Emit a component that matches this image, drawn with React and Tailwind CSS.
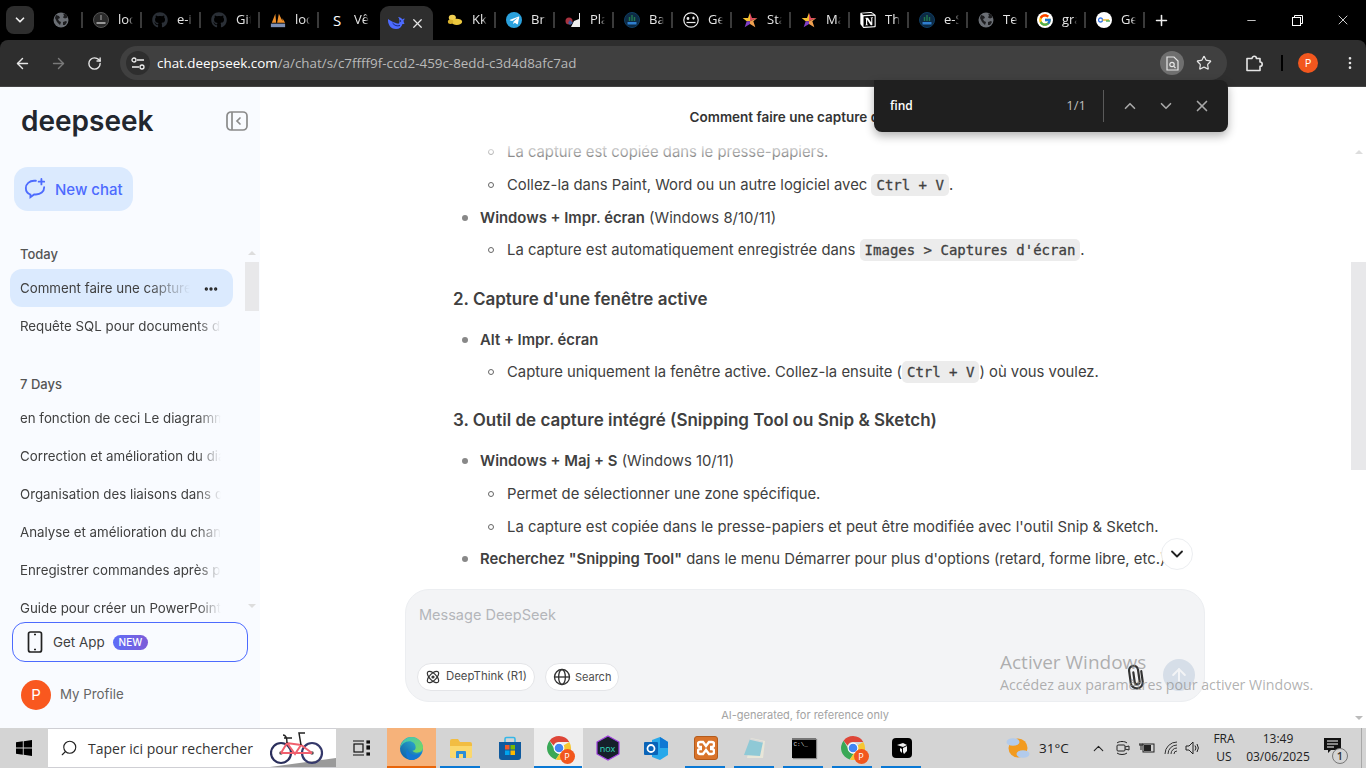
import React from "react";
import { FaGithub, FaTelegramPlane } from "react-icons/fa";
import { FcGoogle } from "react-icons/fc";
import { SiNotion } from "react-icons/si";
import { ArrowLeft, ArrowRight, RotateCw, Star, MoreVertical, X, Plus, ChevronDown, ChevronUp, ArrowUp, Search, Minus, Ellipsis } from "lucide-react";

const Globe = ({ c = "#6b6f75" }) => (
  <svg width="16" height="16" viewBox="0 0 16 16"><circle cx="8" cy="8" r="7.5" fill={c} /><path d="M3 3l3 1 1 2-2 1 1 2 2 1-1 3-3-3-2-4zM10 1.500l1 2-1 2 2 1 2.500-1-1-3zM10 10l3-1 1 1-2 3-2 0z" fill="#1d1d1f" /></svg>
);
const Pnb = () => (
  <svg width="16" height="16" viewBox="0 0 16 16"><circle cx="8" cy="8" r="7.500" fill="#0d2a44" stroke="#0e3d63" /><path d="M8 3v6M5.500 5v4M10.500 5v4" stroke="#22794e" strokeWidth="1.400" /><rect x="3.500" y="10" width="9" height="2.500" fill="#2f7fd0" /></svg>
);
const Inpi = () => (
  <svg width="16" height="16" viewBox="0 0 16 16"><circle cx="8" cy="8" r="7.500" fill="#2a2a2a" stroke="#555" /><path d="M8 3v5" stroke="#aaa" /><rect x="3.500" y="10" width="9" height="2" fill="#999" /></svg>
);
const Sails = () => (
  <svg width="18" height="17" viewBox="0 0 18 17"><path d="M2 11 6 1l1 10zM8 11l2-10 5 10zM14 11l0-5 3 5z" fill="#ee8f2a" /><rect x="1" y="12" width="16" height="4" fill="#7d8fb5" /></svg>
);
const Whale = () => (
  <svg width="18" height="14" viewBox="0 0 18 14"><path fill="#4d6bfe" d="M1 3c-.5 5 2.500 10 8 10 3.500 0 5.500-2 6.500-5 .8.2 1.500 0 2-.5-.6-.7-1-1.700-1-3 .5-.4 1-1 1.200-2-.9.1-1.700.4-2.300 1C14.500 2 13 1 11 1c1.500 1.500 2 4 1 6.500C9 8 4 5 1 3z" /><path d="M5.500 7c2 2.500 4.500 3.500 7.500 2.500" stroke="#0b1a5c" strokeWidth=".8" fill="none" /><circle cx="13.500" cy="5" r=".7" fill="#0b1a5c" /></svg>
);
const Coins = () => (
  <svg width="18" height="14" viewBox="0 0 18 14"><ellipse cx="6" cy="4.500" rx="4" ry="3.500" fill="#f0cf52" /><ellipse cx="11" cy="9" rx="6" ry="3.500" fill="#ecc83e" /><ellipse cx="4" cy="9" rx="3" ry="2.500" fill="#d9b12c" /></svg>
);
const Telegram = () => (
  <span className="w-4 h-4 rounded-full bg-[#2aa1dd] flex items-center justify-center text-white"><FaTelegramPlane size={11} /></span>
);
const Plaza = () => (
  <svg width="16" height="16" viewBox="0 0 16 16"><path d="M14 1h1v14H6l3-6 5-2z" fill="#eee" /><circle cx="4" cy="9" r="3.500" fill="#a8323f" /><path d="M5 8l3 3-3 2-2-2z" fill="#3e5c9c" /></svg>
);
const Gemoji = () => (
  <svg width="16" height="16" viewBox="0 0 16 16" fill="none" stroke="#eee" strokeWidth="1.200"><circle cx="8" cy="8" r="7.200" /><path d="M3.500 10.500h9" /><circle cx="5" cy="6.500" r=".8" fill="#eee" /><path d="M10.500 4.500v3M9 6h3" /></svg>
);
const StarC = () => (
  <svg width="16" height="16" viewBox="0 0 24 24"><path d="M12 1l3 8h8l-11 5z" fill="#e04e5e" /><path d="M12 1 9 9H1l6 5 5 0z" fill="#f5c030" /><path d="M7 14 4 23l8-5 0-4z" fill="#7f3fc4" /><path d="M12 14v4l8 5-3-9 6-5z" fill="#f0a050" /></svg>
);
const Notion = () => <span className="w-4 h-4 flex items-center justify-center text-white"><SiNotion size={16} /></span>;
const GoogleI = () => <span className="w-4 h-4 rounded-full bg-white flex items-center justify-center"><FcGoogle size={14} /></span>;
const GKey = () => (
  <span className="w-4 h-4 rounded-full bg-white flex items-center justify-center">
    <svg width="12" height="8" viewBox="0 0 12 8"><circle cx="2.500" cy="4" r="2" fill="none" stroke="#3a78e8" strokeWidth="1.300" /><path d="M4.500 4H11" stroke="#e8b020" strokeWidth="1.400" /><path d="M9 4v2M11 4v2" stroke="#3aa856" strokeWidth="1.300" /></svg>
  </span>
);

const tabs = [
  { i: <Globe />, w: "w-[41px]", noTitle: true },
  { i: <Inpi />, t: "localhost" },
  { i: <FaGithub size={16} color="#2a2f36" />, t: "e-invoice" },
  { i: <FaGithub size={16} color="#2a2f36" />, t: "GitHub" },
  { i: <Sails />, t: "localhost" },
  { i: <span className="w-4 text-center text-white text-[15px] leading-4">S</span>, t: "Vêtements" },
  { active: true },
  { i: <Coins />, t: "Kkiapay" },
  { i: <Telegram />, t: "Bruno" },
  { i: <Plaza />, t: "Plateforme" },
  { i: <Pnb />, t: "Banque" },
  { i: <Gemoji />, t: "Generate" },
  { i: <StarC />, t: "Starter" },
  { i: <StarC />, t: "Manager" },
  { i: <Notion />, t: "The" },
  { i: <Pnb />, t: "e-Services" },
  { i: <Globe />, t: "Test" },
  { i: <GoogleI />, t: "gratuit" },
  { i: <GKey />, t: "Get" },
];

function Tab({ tab, hideSep }) {
  if (tab.active) {
    return (
      <div className="w-[59px] h-[34px] self-end flex items-center justify-center">
        <div className="w-[53px] h-[34px] bg-[#2e2e2e] rounded-t-[9px] flex items-center pl-[7px] gap-[5px]">
          <Whale />
          <X size={15} color="#e6e6e6" strokeWidth={2} />
        </div>
      </div>
    );
  }
  return (
    <div className={`${tab.w || "w-[59px]"} h-10 flex items-center shrink-0`}>
      <div className={`flex-1 flex items-center ${tab.noTitle ? "justify-center" : "pl-[11px]"} gap-[9px] min-w-0`}>
        <span className="w-4 flex justify-center shrink-0">{tab.i}</span>
        {tab.t && (
          <span className="w-[15px] overflow-hidden whitespace-nowrap text-[13px] text-[#e6e6e6] [mask-image:linear-gradient(to_right,black_70%,transparent)]">{tab.t}</span>
        )}
      </div>
      {!hideSep && <span className="w-[2px] h-[16px] bg-[#3a3a3a] shrink-0 mr-[-1px]" />}
    </div>
  );
}

function ChromeIco({ s = 26, badge = true }) {
  return (
    <span className="relative inline-block" style={{ width: s, height: s }}>
      <svg width={s} height={s} viewBox="0 0 24 24">
        <path d="M12 1a11 11 0 0 1 9.500 5.500H12A5.500 5.500 0 0 0 7 9.700L3.300 5.200A11 11 0 0 1 12 1z" fill="#de4638" />
        <path d="M3.300 5.200 7.500 12.500a5 5 0 0 0 5 5L9 22.600A11 11 0 0 1 3.300 5.200z" fill="#3aa856" />
        <path d="M21.500 6.500A11 11 0 0 1 9 22.600l4-6a5 5 0 0 0 3-7z" fill="#f6c733" />
        <circle cx="12" cy="12" r="4.500" fill="#4285f4" stroke="#fff" strokeWidth="1" />
      </svg>
      {badge && <span className="absolute right-[-3px] bottom-[-3px] w-[15px] h-[15px] rounded-full bg-[#f2571e] text-white text-[9px] leading-[15px] text-center font-['Open_Sans',sans-serif]">P</span>}
    </span>
  );
}

const Edge = () => (
  <svg width="25" height="25" viewBox="0 0 24 24">
    <defs>
      <linearGradient id="eg" x1="0" y1="1" x2="1" y2="0"><stop offset="0" stopColor="#0c59a4" /><stop offset="1" stopColor="#36c1d8" /></linearGradient>
      <linearGradient id="eh" x1="0" y1="0" x2="1" y2="1"><stop offset="0" stopColor="#3bc4c0" /><stop offset="1" stopColor="#7edb54" /></linearGradient>
    </defs>
    <circle cx="12" cy="12" r="11" fill="url(#eg)" />
    <path d="M1 12C2 5 7 1 12 1c6 0 11 5 11 10 0 3-3 5-6 5-2 0-4-1-4-2 2 0 3-1 3-3 0-4-3-6-6-6-4 0-8 3-9 7z" fill="url(#eh)" />
    <path d="M8 12c0 3 3 6 6 6 3 0 6-1 8-3-1 4-5 8-10 8-3 0-5-2-5-6 0-2 0-4 1-5z" fill="#1377d3" />
  </svg>
);
const Explorer = () => (
  <svg width="24" height="22" viewBox="0 0 24 22"><path d="M1 4a2 2 0 0 1 2-2h6l2 3h10a2 2 0 0 1 2 2v12a2 2 0 0 1-2 2H3a2 2 0 0 1-2-2z" fill="#f2bd42" /><path d="M1 9h22v10a2 2 0 0 1-2 2H3a2 2 0 0 1-2-2z" fill="#fbd86d" /><path d="M7 21v-6a1 1 0 0 1 1-1h8a1 1 0 0 1 1 1v6h-3v-4h-4v4z" fill="#2d8ed8" /></svg>
);
const Store = () => (
  <svg width="24" height="25" viewBox="0 0 24 25"><path d="M7 6V3a1.500 1.500 0 0 1 1.500-1.500h7A1.500 1.500 0 0 1 17 3v3" fill="none" stroke="#36b7e8" strokeWidth="1.600" /><path d="M1 6h22v15a3 3 0 0 1-3 3H4a3 3 0 0 1-3-3z" fill="#0f5a9e" /><rect x="7" y="9" width="4.500" height="4.500" fill="#f05a28" /><rect x="12.500" y="9" width="4.500" height="4.500" fill="#7ab800" /><rect x="7" y="14.500" width="4.500" height="4.500" fill="#00a4ef" /><rect x="12.500" y="14.500" width="4.500" height="4.500" fill="#ffb900" /></svg>
);
const Nox = () => (
  <span className="relative w-[24px] h-[26px] flex items-center justify-center">
    <svg width="24" height="26" viewBox="0 0 24 26" className="absolute inset-0"><path d="M12 1 23 7v12l-11 6L1 19V7z" fill="#16202a" stroke="#a03ee0" strokeWidth="1.200" /></svg>
    <span className="relative text-[9px] leading-none text-[#35dfc0] font-['Open_Sans',sans-serif]">nox</span>
  </span>
);
const Outlook = () => (
  <svg width="25" height="23" viewBox="0 0 25 23"><path d="M8 3 16 0l8 5v13l-8 5-8-3z" fill="#28a8ea" /><path d="M16 0l8 5v6l-8 0z" fill="#0f78d4" /><rect x="0" y="5" width="14" height="13" rx="1" fill="#0a64b8" /><circle cx="7" cy="11.500" r="3.500" fill="none" stroke="#fff" strokeWidth="1.800" /></svg>
);
const Xampp = () => (
  <span className="w-[24px] h-[24px] rounded-[3px] bg-[#d9732a] border border-[#b35b1c] flex items-center justify-center">
    <svg width="18" height="16" viewBox="0 0 18 16" fill="none" stroke="#fff" strokeWidth="2.400"><path d="M3 2h3l3 4 3-4h3a2 2 0 0 1 2 2v1a2 2 0 0 1-2 2h-2M3 2a2 2 0 0 0-2 2v1a2 2 0 0 0 2 2h2M3 14a2 2 0 0 1-2-2v-1a2 2 0 0 1 2-2h2M15 14a2 2 0 0 0 2-2v-1a2 2 0 0 0-2-2h-2M3 14h3l3-4 3 4h3" /></svg>
  </span>
);
const Notepad = () => (
  <svg width="24" height="24" viewBox="0 0 24 24"><path d="M8 2 22 5 20 22 4 22z" fill="#e8e6d8" /><path d="M7 3 20 6 17 20 1 19z" fill="#8fc9d6" /><path d="M7 3 20 6" stroke="#d9d9d9" strokeWidth="1.500" /></svg>
);
const Cmd = () => (
  <span className="w-[24px] h-[20px] bg-black border-t-[2px] border-[#777] flex items-start pl-[2px] pt-[1px] text-[6px] leading-[8px] text-[#ddd] font-['Liberation_Mono',monospace] shadow-[1px_1px_1px_#888]">C:\_</span>
);
const Cube = () => (
  <span className="w-[20px] h-[20px] rounded-[4px] bg-black flex items-center justify-center">
    <svg width="12" height="13" viewBox="0 0 12 13"><path d="M1 3l6-2 4 2-4 2zM7 6l4-2v5l-3 3-1-2zM4 6l2 1v4L4 9z" fill="#eee" /></svg>
  </span>
);
const Bike = () => (
  <svg width="66" height="36" viewBox="0 0 66 36" fill="none" className="block">
    <path d="M0 36 66 27v9z" fill="#9a9a9a" />
    <circle cx="11" cy="22" r="10" stroke="#2a2f5c" strokeWidth="2.200" />
    <circle cx="42" cy="22" r="10" stroke="#34386a" strokeWidth="2.200" />
    <circle cx="11" cy="22" r="1.800" fill="#555" /><circle cx="42" cy="22" r="1.800" fill="#555" />
    <path d="M11 22 17 12 L31 14 L42 22 M17 12 L25 23 L31 14 M11 22H25 L42 22" stroke="#f0606e" strokeWidth="2" />
    <path d="M31 14 29 2h6M14 7h8M13 4c3 0 4 3 4 8" stroke="#222" strokeWidth="1.500" />
  </svg>
);
const Weather = () => (
  <svg width="24" height="24" viewBox="0 0 24 24"><circle cx="12" cy="12" r="9.500" fill="#f29b20" /><ellipse cx="7" cy="6" rx="6.500" ry="3.800" fill="#b2cbec" /><ellipse cx="17" cy="18" rx="6.500" ry="3.800" fill="#b2cbec" /></svg>
);
const WinLogo = () => (
  <svg width="16" height="16" viewBox="0 0 16 16" fill="#000"><path d="M0 2.300 6.800 1.300v6.200H0zM7.700 1.200 16 0v7.500H7.700zM0 8.400h6.800v6.300L0 13.700zM7.700 8.400H16V16l-8.300-1.200z" /></svg>
);

const TaskBtn = ({ children, under, bg }) => (
  <div className={`w-[49px] h-full flex items-center justify-center relative ${bg || ""}`}>
    {children}
    {under && <span className={`absolute bottom-0 h-[2px] ${under}`} />}
  </div>
);

const Side = ({ children }) => (
  <div className="h-[38px] shrink-0 px-[10px] pt-[2px] flex items-center text-[13.3px] text-[#404040] whitespace-nowrap">
    <span className="overflow-hidden w-[201px] [mask-image:linear-gradient(to_right,black_88%,transparent)]">{children}</span>
  </div>
);

const Code = ({ children }) => (
  <code className="bg-[#ececec] rounded-[5px] px-[5px] py-[3px] font-['DejaVu_Sans_Mono','Liberation_Mono',monospace] text-[14px] [-webkit-text-stroke:0.3px_#404040] text-[#404040] leading-[24px]">{children}</code>
);
const Li = ({ children, first }) => (
  <li className={`${first ? "" : "mt-[9px]"} leading-[24px] relative before:content-[''] before:absolute before:left-[-19px] before:top-[9px] before:w-[6px] before:h-[6px] before:rounded-full before:border before:border-[#666]`}>{children}</li>
);
const Outer = ({ children, cls }) => (
  <li className={`${cls || ""} leading-[24px] relative before:content-[''] before:absolute before:left-[-18px] before:top-[9px] before:w-[6px] before:h-[6px] before:rounded-full before:bg-[#888]`}>{children}</li>
);
const Sub = ({ children, tight }) => (
  <ul className={`pl-[27px] ${tight ? "mt-[8px]" : "mt-[9px]"}`}>{children}</ul>
);
const H3 = ({ children, cls }) => (
  <h3 className={`${cls} text-[17px] leading-[28px] font-semibold text-[#404040]`}>{children}</h3>
);

export default function App() {
  return (
    <div className="relative w-[1366px] h-[768px] overflow-hidden flex flex-col bg-white font-['Inter','Liberation_Sans',sans-serif]">
      {/* tab strip */}
      <div className="h-10 bg-black flex items-center shrink-0 font-['Open_Sans',sans-serif]">
        <div className="w-[28px] h-[28px] ml-[6px] mr-[7px] rounded-[8px] bg-[#2e2e2e] flex items-center justify-center shrink-0">
          <ChevronDown size={14} color="#eee" strokeWidth={3} />
        </div>
        {tabs.map((t, i) => (
          <Tab key={i} tab={t} hideSep={t.active || i === 5} />
        ))}
        <div className="w-[35px] flex justify-center"><Plus size={17} color="#eee" strokeWidth={2.200} /></div>
        <div className="flex-1" />
        <div className="flex items-center text-white">
          <div className="w-[46px] flex justify-center"><Minus size={13} strokeWidth={1.400} /></div>
          <div className="w-[46px] flex justify-center">
            <svg width="11" height="11" viewBox="0 0 11 11" fill="none" stroke="#fff"><rect x=".5" y="2.500" width="8" height="8" /><path d="M2.500 2.500V.5h8v8h-2" /></svg>
          </div>
          <div className="w-[46px] flex justify-center"><X size={16} strokeWidth={1.200} /></div>
        </div>
      </div>

      {/* toolbar */}
      <div className="h-[47px] shrink-0 bg-black">
        <div className="h-[47px] bg-[#2e2e2e] rounded-t-[8px] flex items-center font-['Open_Sans',sans-serif] border-b border-[#444]">
          <div className="w-[44px] flex justify-center"><ArrowLeft size={17} color="#e6e6e6" strokeWidth={2} /></div>
          <div className="w-[28px] flex justify-center"><ArrowRight size={17} color="#7a7a7a" strokeWidth={2} /></div>
          <div className="w-[44px] flex justify-center"><RotateCw size={15} color="#e6e6e6" strokeWidth={2.200} /></div>
          <div className="w-[1107px] h-[34px] ml-[4px] rounded-full bg-[#404040] flex items-center pl-[6px] pr-[15px] shrink-0">
            <div className="w-6 h-6 rounded-full bg-[#2e2e2e] flex items-center justify-center">
              <svg width="14" height="13" viewBox="0 0 14 13" fill="none" stroke="#eee" strokeWidth="1.300"><circle cx="3" cy="3" r="2" /><path d="M6 3h7M1 10h7" /><circle cx="11" cy="10" r="2" /></svg>
            </div>
            <div className="ml-[7px] text-[13.4px] text-[#b9b9b9] whitespace-nowrap"><span className="text-white">chat.deepseek.com</span>/a/chat/s/c7ffff9f-ccd2-459c-8edd-c3d4d8afc7ad</div>
            <div className="flex-1" />
            <div className="w-6 h-6 rounded-full bg-[#6f6f6f] flex items-center justify-center">
              <svg width="13" height="15" viewBox="0 0 13 15" fill="none" stroke="#e6e6e6" strokeWidth="1.200"><path d="M1 1h7l4 4v9H1z" /><circle cx="6" cy="8.500" r="2.200" /><path d="M7.800 10.300 9.500 12" /></svg>
            </div>
            <div className="w-[12px]" />
            <Star size={16} color="#e6e6e6" strokeWidth={1.800} />
          </div>
          <div className="w-[54px] flex justify-center">
            <svg width="17" height="17" viewBox="0 0 17 17" fill="none" stroke="#e6e6e6" strokeWidth="1.600"><path d="M1 3.500h5a2.200 2.200 0 0 1 4.400 0H14v3.500a2.200 2.200 0 0 1 0 4.400V15.500H1z" strokeLinejoin="round" /></svg>
          </div>
          <div className="w-[2px] h-[16px] bg-black" />
          <div className="w-[50px] flex justify-center"><span className="w-5 h-5 rounded-full bg-[#f2571e] text-white text-[11px] leading-5 text-center">P</span></div>
          <div className="flex-1 flex justify-center"><MoreVertical size={16} color="#e6e6e6" strokeWidth={2} /></div>
        </div>
      </div>

      {/* page */}
      <div className="flex-1 min-h-0 flex bg-white">
        {/* sidebar */}
        <aside className="w-[260px] shrink-0 bg-[#f9fbff] flex flex-col">
          <div className="h-[68px] shrink-0 pl-[20px] pr-[12px] flex items-center justify-between">
            <span className="text-[28px] leading-none font-semibold text-[#22262e] relative left-[1px]">deepseek</span>
            <svg width="22" height="20" viewBox="0 0 22 20" fill="none" stroke="#8b8b8b" strokeWidth="1.700"><rect x="1" y="1" width="20" height="18" rx="4" /><path d="M6 1v18" /><path d="M14 7l-3 3 3 3" strokeLinecap="round" /></svg>
          </div>
          <div className="pl-[14px] mt-[12px] shrink-0">
            <div className="w-[119px] h-[44px] rounded-[14px] bg-[#dbeafe] flex items-center pl-[10px] gap-[9px] text-[#4d6bfe] text-[15px] font-medium">
              <svg width="22" height="22" viewBox="0 0 24 24" fill="none" stroke="#4d6bfe" strokeWidth="2" strokeLinecap="round"><path d="M13 3H11C6 3 2 6.500 2 11c0 3.500 2 6 5 7v3l4-3h2c5 0 9-3 9-8" /><path d="M19 1v6M16 4h6" /></svg>
              <span className="relative top-[1px]">New chat</span>
            </div>
          </div>
          <div className="flex-1 min-h-0 flex mt-[34px]">
            <div className="w-[223px] ml-[10px] overflow-hidden">
              <div className="h-[24px] px-[10px] pb-[4px] flex items-center text-[13px] font-medium text-[#555]">Today</div>
              <div className="h-[38px] rounded-[12px] bg-[#dbeafe] px-[10px] pt-[2px] flex items-center text-[13.3px] text-[#404040] whitespace-nowrap">
                <span className="overflow-hidden w-[170px] [mask-image:linear-gradient(to_right,black_75%,transparent)]">Comment faire une capture d'écran</span>
                <Ellipsis size={16} color="#222" strokeWidth={3} className="ml-[13px]" />
              </div>
              <Side>Requête SQL pour documents de base</Side>
              <div className="h-[24px] mt-[28px] mb-[2px] px-[10px] flex items-center text-[13px] font-medium text-[#555]">7 Days</div>
              <Side>en fonction de ceci Le diagramme de</Side>
              <Side>Correction et amélioration du diagramme</Side>
              <Side>Organisation des liaisons dans diagramme</Side>
              <Side>Analyse et amélioration du changement</Side>
              <Side>Enregistrer commandes après paiement</Side>
              <Side>Guide pour créer un PowerPoint efficace</Side>
            </div>
            <div className="w-[14px] ml-[12px] flex flex-col items-center">
              <span className="mt-[6px] w-0 h-0 border-x-[4px] border-x-transparent border-b-[4px] border-b-[#ddd]" />
              <div className="mt-[7px] w-[14px] h-[49px] bg-[#e8e8ea]" />
              <div className="flex-1" />
              <span className="mb-[14px] w-0 h-0 border-x-[4px] border-x-transparent border-t-[4px] border-t-[#ddd]" />
            </div>
          </div>
          <div className="h-[40px] ml-[12px] w-[236px] shrink-0 rounded-[13px] border border-[#4d6bfe] flex items-center pl-[13px] text-[13.4px] text-[#404040]">
            <svg width="18" height="22" viewBox="0 0 18 22" fill="none" stroke="#222" strokeWidth="1.700"><rect x="2.500" y="1" width="13" height="20" rx="2" /><path d="M8 3.500h2M8 18.500h2" /></svg>
            <span className="ml-[9px]">Get App</span>
            <span className="ml-[8px] h-[15px] px-[6px] rounded-full bg-gradient-to-r from-[#5b6ef8] to-[#7d5bd8] text-white text-[10px] leading-[15px] font-medium">NEW</span>
          </div>
          <div className="h-[66px] shrink-0 pl-[21px] flex items-center gap-[9px] text-[13.3px] text-[#666]">
            <span className="w-[30px] h-[30px] rounded-full bg-[#f9581f] text-white text-[15px] leading-[30px] text-center">P</span>
            My Profile
          </div>
        </aside>

        {/* main */}
        <main className="flex-1 min-w-0 flex flex-col items-center pr-[1px]">
          <div className="h-[45px] shrink-0 w-full flex items-center justify-center text-[13.5px] font-semibold text-[#333] pt-[16px]">
            Comment faire une capture d'écran
          </div>
          <div className="relative flex-1 min-h-0 w-[800px] pt-[8px] pl-[48px] text-[14.85px] text-[#404040] overflow-hidden">
            <div className="absolute left-0 right-0 top-0 h-[34px] bg-gradient-to-b from-white from-[30%] to-transparent z-10" />
            <ul className="pl-[27px]">
              <li>
                <ul className="pl-[27px]">
                  <Li first>La capture est copiée dans le presse-papiers.</Li>
                  <Li>Collez-la dans Paint, Word ou un autre logiciel avec <Code>Ctrl + V</Code>.</Li>
                </ul>
              </li>
              <Outer cls="mt-[9px]"><strong className="font-semibold">Windows + Impr. écran</strong> (Windows 8/10/11)
                <Sub tight><Li first>La capture est automatiquement enregistrée dans <Code>Images &gt; Captures d'écran</Code>.</Li></Sub>
              </Outer>
            </ul>
            <H3 cls="mt-[23px]">2. Capture d'une fenêtre active</H3>
            <ul className="pl-[27px] mt-[15px]">
              <Outer><strong className="font-semibold">Alt + Impr. écran</strong>
                <Sub tight><Li first>Capture uniquement la fenêtre active. Collez-la ensuite (<Code>Ctrl + V</Code>) où vous voulez.</Li></Sub>
              </Outer>
            </ul>
            <H3 cls="mt-[22px]">3. Outil de capture intégré (Snipping Tool ou Snip &amp; Sketch)</H3>
            <ul className="pl-[27px] mt-[15px]">
              <Outer><strong className="font-semibold">Windows + Maj + S</strong> (Windows 10/11)
                <Sub>
                  <Li first>Permet de sélectionner une zone spécifique.</Li>
                  <Li>La capture est copiée dans le presse-papiers et peut être modifiée avec l'outil Snip &amp; Sketch.</Li>
                </Sub>
              </Outer>
              <Outer cls="mt-[8px]"><span className="whitespace-nowrap"><strong className="font-semibold">Recherchez "Snipping Tool"</strong> dans le menu Démarrer pour plus d'options (retard, forme libre, etc.).</span></Outer>
            </ul>
            <div className="absolute left-[756px] bottom-[19px] w-[32px] h-[32px] rounded-full bg-white border border-[#eceef1] flex items-center justify-center">
              <ChevronDown size={20} color="#222" strokeWidth={2.200} />
            </div>
          </div>
          <div className="w-[800px] h-[113px] shrink-0 rounded-[24px] bg-[#f3f4f6] border border-[#eceef1] pl-[11px] pr-[9px] flex flex-col">
            <div className="pl-[2px] pt-[13px] text-[14.5px] leading-[24px] text-[#b4b6ba]">Message DeepSeek</div>
            <div className="flex-1" />
            <div className="flex items-end gap-[10px] pb-[10px]">
              <div className="h-[28px] px-[7px] rounded-full bg-white border border-[#e4e5e8] flex items-center gap-[5px] text-[11.4px] text-[#4c4c4c]">
                <svg width="16" height="16" viewBox="0 0 24 24" fill="none" stroke="#333" strokeWidth="1.800"><ellipse cx="12" cy="12" rx="11" ry="5" transform="rotate(45 12 12)" /><ellipse cx="12" cy="12" rx="11" ry="5" transform="rotate(-45 12 12)" /><circle cx="12" cy="12" r="1.500" fill="#333" /></svg>
                DeepThink (R1)
              </div>
              <div className="h-[28px] px-[7px] rounded-full bg-white border border-[#e4e5e8] flex items-center gap-[4px] text-[11px] text-[#4c4c4c]">
                <svg width="18" height="18" viewBox="0 0 24 24" fill="none" stroke="#333" strokeWidth="1.800"><circle cx="12" cy="12" r="10" /><ellipse cx="12" cy="12" rx="4.500" ry="10" /><path d="M2 12h20" /></svg>
                Search
              </div>
              <div className="flex-1" />
              <svg width="20" height="26" viewBox="0 0 20 26" fill="none" stroke="#333" strokeWidth="2.200" strokeLinecap="round" className="rotate-[-8deg] mr-[7px] mb-[1px]"><path d="M8 8v10a2.500 2.500 0 0 0 5 0V6a4.500 4.500 0 0 0-9 0v12.500a6 6 0 0 0 12 0V8" /></svg>
              <div className="w-8 h-8 rounded-full bg-[#d6dee8] flex items-center justify-center"><ArrowUp size={20} color="#f3f4f6" strokeWidth={2.400} /></div>
            </div>
          </div>
          <div className="h-[26px] shrink-0 flex items-center text-[11px] text-[#a3a3a3]">AI-generated, for reference only</div>
        </main>

        {/* page scrollbar */}
        <div className="w-[15px] shrink-0 flex flex-col items-center">
          <span className="mt-[63px] w-0 h-0 border-x-[4px] border-x-transparent border-b-[4px] border-b-[#ddd]" />
          <div className="mt-[108px] w-[15px] h-[208px] bg-[#e8e8ea]" />
          <div className="flex-1" />
          <span className="mb-[8px] w-0 h-0 border-x-[4px] border-x-transparent border-t-[4px] border-t-[#bbb]" />
        </div>
      </div>

      {/* taskbar */}
      <div className="h-[40px] shrink-0 bg-[#d4d4d4] flex items-center font-['Open_Sans',sans-serif] text-black">
        <div className="w-[48px] h-full flex items-center justify-center"><WinLogo /></div>
        <div className="w-[288px] h-full bg-white flex items-center pl-[12px] overflow-hidden border-y border-[#cfcfd4]">
          <Search size={18} color="#222" strokeWidth={1.500} className="rotate-90" />
          <span className="ml-[10px] text-[14px] text-[#333] whitespace-nowrap">Taper ici pour rechercher</span>
          <span className="ml-auto self-end"><Bike /></span>
        </div>
        <div className="w-[51px] h-full flex items-center justify-center">
          <svg width="17" height="16" viewBox="0 0 17 16" fill="none" stroke="#111" strokeWidth="1.200"><path d="M0 1h11M0 15h11" /><rect x="1" y="4" width="9" height="8" /><rect x="14" y="1" width="3" height="2" fill="#111" /><rect x="14" y="6" width="3" height="3" fill="#111" /><rect x="14" y="13" width="3" height="2" fill="#111" /></svg>
        </div>
        <TaskBtn bg="bg-[#f6b27a]" under="left-0 right-0 bg-[#e8650a]"><Edge /></TaskBtn>
        <TaskBtn under="left-[4px] right-[5px] bg-[#0a78d4]"><Explorer /></TaskBtn>
        <TaskBtn><Store /></TaskBtn>
        <TaskBtn bg="bg-[#eeeeee]" under="left-0 right-[1px] bg-[#0a78d4]"><ChromeIco /></TaskBtn>
        <TaskBtn><Nox /></TaskBtn>
        <TaskBtn><Outlook /></TaskBtn>
        <TaskBtn under="left-[4px] right-[5px] bg-[#0a78d4]"><Xampp /></TaskBtn>
        <TaskBtn under="left-[4px] right-[5px] bg-[#0a78d4]"><Notepad /></TaskBtn>
        <TaskBtn under="left-[4px] right-[5px] bg-[#0a78d4]"><Cmd /></TaskBtn>
        <TaskBtn under="left-[4px] right-[5px] bg-[#0a78d4]"><ChromeIco /></TaskBtn>
        <TaskBtn under="left-[4px] right-[5px] bg-[#0a78d4]"><Cube /></TaskBtn>
        <div className="flex-1" />
        <Weather />
        <span className="ml-[9px] w-[30px] whitespace-nowrap text-[13.5px] text-[#222]">31°C</span>
        <ChevronUp size={17} color="#222" strokeWidth={1.500} className="ml-[21px]" />
        <svg width="16" height="18" viewBox="0 0 16 18" fill="none" stroke="#222" className="ml-[8px]"><path d="M2 4c2-2 8-2 10 0M2 14c2 2 8 2 10 0" /><rect x="2" y="6" width="8" height="6" rx="1" /><path d="M10 8l4-1v4l-4-1" /></svg>
        <svg width="16" height="12" viewBox="0 0 16 12" className="ml-[8px]"><rect x="4" y="2" width="11" height="8" fill="none" stroke="#222" /><rect x="5" y="3" width="7" height="6" fill="#222" /><path d="M0 3h4M1 1v2M3 1v2M2 3v5" stroke="#222" /></svg>
        <svg width="15" height="14" viewBox="0 0 15 14" fill="none" stroke="#333" className="ml-[9px]"><path d="M1 13a12 12 0 0 1 12-12M4 13a9 9 0 0 1 9-9M7 13a6 6 0 0 1 6-6M10 13a3 3 0 0 1 3-3" /></svg>
        <svg width="16" height="14" viewBox="0 0 16 14" fill="none" stroke="#222" className="ml-[6px]"><path d="M1 5h3l4-4v12l-4-4H1z" /><path d="M10 4.500a4 4 0 0 1 0 5M12 3a7 7 0 0 1 0 8" /></svg>
        <div className="ml-[8px] w-[30px] flex flex-col items-center text-[12px] leading-[18px] text-[#222]"><span>FRA</span><span>US</span></div>
        <div className="ml-[3px] w-[72px] flex flex-col items-center text-[12px] leading-[18px] text-[#222]"><span>13:49</span><span>03/06/2025</span></div>
        <div className="relative w-[47px] ml-[1px] h-full flex items-center justify-center border-r border-[#a8a8a8]">
          <svg width="17" height="16" viewBox="0 0 17 16" className="relative left-[-6px] top-[-2px]"><path d="M0 0h17v12H7l-3 3v-3H0z" fill="#111" /><path d="M3 3h11M3 6h11M3 9h7" stroke="#fff" /></svg>
          <span className="absolute left-[17px] top-[20px] w-[16px] h-[16px] rounded-full border border-[#777] bg-[#d4d4d4] text-[11px] leading-[14px] text-center font-semibold text-[#333]">1</span>
        </div>
        <div className="w-[4px]" />
      </div>

      {/* find bar */}
      <div className="absolute z-20 left-[874px] top-[80px] w-[354px] h-[52px] bg-[#1f1f1f] rounded-b-[8px] rounded-tr-[8px] shadow-[0_4px_10px_rgba(0,0,0,0.3)] flex items-center pl-[16px] text-[12px] font-['Open_Sans',sans-serif]">
        <span className="text-white font-semibold">find</span>
        <div className="flex-1" />
        <span className="text-[#bdbdbd] text-[13px]">1/1</span>
        <span className="w-px h-[32px] bg-[#5a5a5a] ml-[17px]" />
        <div className="w-[36px] ml-[8px] flex justify-center"><ChevronUp size={18} color="#a8a8a8" strokeWidth={2.200} /></div>
        <div className="w-[36px] flex justify-center"><ChevronDown size={18} color="#a8a8a8" strokeWidth={2.200} /></div>
        <div className="w-[36px] mr-[8px] flex justify-center"><X size={18} color="#a8a8a8" strokeWidth={2.200} /></div>
      </div>

      {/* windows watermark */}
      <div className="absolute left-[1000px] top-[649px] pointer-events-none text-[#8f8f8f]/70 font-['Open_Sans',sans-serif] whitespace-nowrap">
        <div className="text-[19px] leading-[27px]">Activer Windows</div>
        <div className="text-[14.2px] leading-[18px]">Accédez aux paramètres pour activer Windows.</div>
      </div>
    </div>
  );
}
